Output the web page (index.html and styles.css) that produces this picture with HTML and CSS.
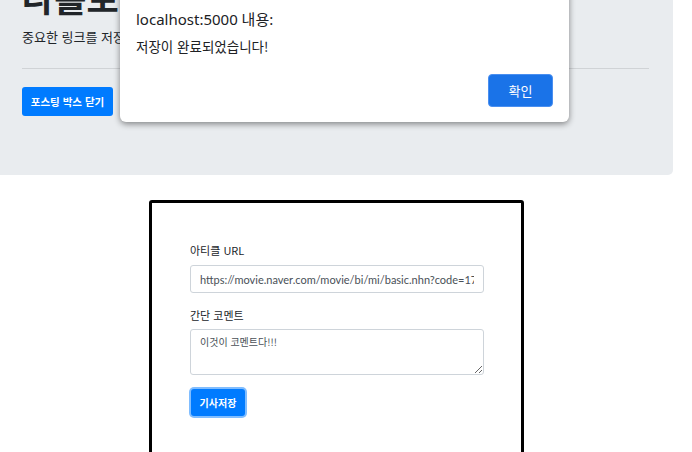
FILE: index.html
```html
<!DOCTYPE html>
<html lang="ko">
<head>
<meta charset="utf-8">
<title>나홀로 링크 메모장</title>
<link rel="stylesheet" href="styles.css">
</head>
<body>
<div class="page">
  <div class="jumbotron">
    <h1 class="title">나홀로 링크 메모장</h1>
    <p class="lead">중요한 링크를 저장해두고, 나중에 볼 수 있는 공간입니다</p>
    <hr class="divider">
    <button class="btn btn-open">포스팅 박스 닫기</button>
  </div>
  <div class="post-box">
    <label class="field-label">아티클 URL</label>
    <input class="field-input" type="text" value="https://movie.naver.com/movie/bi/mi/basic.nhn?code=171539">
    <label class="field-label second">간단 코멘트</label>
    <textarea class="field-textarea">이것이 코멘트다!!!</textarea>
    <button class="btn btn-save">기사저장</button>
  </div>
</div>
<div class="alert-dialog">
  <div class="alert-title">localhost:5000 내용:</div>
  <div class="alert-msg">저장이 완료되었습니다!</div>
  <div class="alert-actions">
    <button class="alert-ok">확인</button>
  </div>
</div>
</body>
</html>
```
FILE: styles.css
```css
* { box-sizing: border-box; }
html, body { margin: 0; padding: 0; background: #fff; overflow: hidden; }
body {
  font-family: "Noto Sans CJK KR", "Noto Sans", sans-serif;
  color: #212529;
  width: 692px;
  height: 452px;
  position: relative;
}
.page { width: 673px; }
.jumbotron {
  background: #e9ecef;
  height: 175px;
  padding: 0 24px 0 22px;
  border-radius: 0 0 5px 0;
  overflow: hidden;
}
.title {
  margin: -24px 0 0;
  font-size: 35px;
  line-height: 42px;
  font-weight: 700;
  white-space: nowrap;
}
.lead {
  margin: 10px 0 0;
  font-size: 13px;
  line-height: 18px;
  white-space: nowrap;
}
.divider {
  margin: 22px 0 0;
  border: 0;
  border-top: 1px solid #d0d3d6;
}
.btn {
  font-family: "Noto Sans CJK KR", sans-serif;
  border: 0;
  color: #fff;
  background: #007bff;
  font-weight: 700;
  border-radius: 3px;
  cursor: pointer;
}
.btn-open {
  display: block;
  margin-top: 18px;
  width: 91px;
  height: 29px;
  font-size: 10.5px;
  padding: 0;
}
.post-box {
  width: 375px;
  margin: 25px auto 0;
  border: 3px solid #000;
  border-radius: 3px;
  padding: 39px 37px 60px 38px;
  display: flex;
  flex-direction: column;
  height: 300px;
}
.field-label {
  font-size: 11px;
  line-height: 16px;
  margin-bottom: 7px;
}
.field-label.second { margin-top: 14px; margin-bottom: 6px; }
.field-input {
  height: 28px;
  width: 100%;
  border: 1px solid #ced4da;
  border-radius: 3px;
  padding: 0 9px;
  font-family: "Lato", "Noto Sans", sans-serif;
  font-size: 11px;
  color: #495057;
  background: #fff;
  outline: none;
}
.field-textarea {
  height: 46px;
  width: 100%;
  border: 1px solid #ced4da;
  border-radius: 3px;
  padding: 5px 9px;
  font-family: "Noto Sans CJK KR", sans-serif;
  font-size: 10px;
  line-height: 14px;
  color: #495057;
  resize: vertical;
  outline: none;
}
.btn-save {
  margin-top: 14px;
  margin-left: 1px;
  align-self: flex-start;
  width: 54px;
  height: 27px;
  font-size: 10px;
  padding: 0;
  box-shadow: 0 0 0 2px #80bdff;
}
.alert-dialog {
  position: absolute;
  left: 120px;
  top: -20px;
  width: 449px;
  height: 142px;
  background: #fff;
  border-radius: 0 0 6px 6px;
  box-shadow: 0 2px 6px rgba(0, 0, 0, 0.45);
  padding: 29px 16px 0 16px;
  font-family: "Noto Sans", "Noto Sans CJK KR", sans-serif;
  color: #202124;
}
.alert-title {
  font-size: 15px;
  line-height: 20px;
}
.alert-msg {
  margin-top: 8px;
  font-size: 13.5px;
  line-height: 18px;
  font-family: "Noto Sans CJK KR", sans-serif;
}
.alert-actions {
  display: flex;
  justify-content: flex-end;
  margin-top: 19px;
}
.alert-ok {
  width: 65px;
  height: 33px;
  background: #1a73e8;
  border: 1px solid #4a8ff0;
  border-radius: 4px;
  color: #fff;
  font-family: "Noto Sans CJK KR", sans-serif;
  font-size: 13px;
  padding: 0;
}
```
